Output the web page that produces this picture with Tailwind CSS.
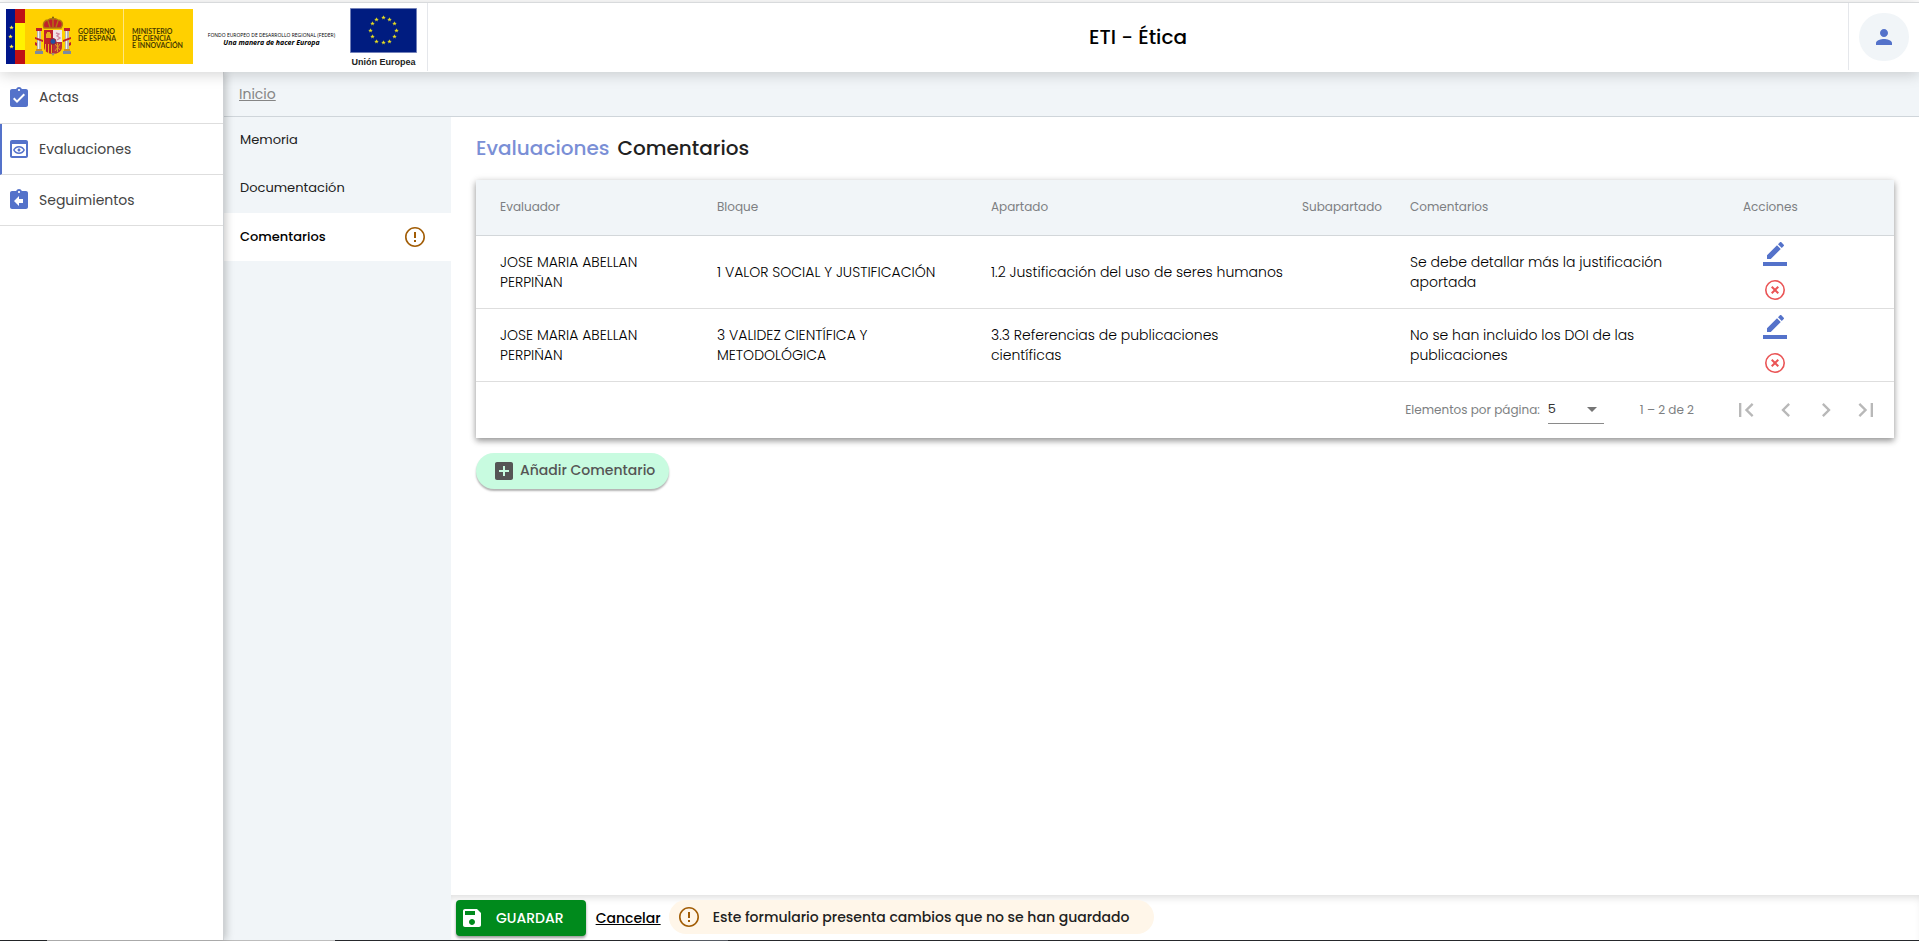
<!DOCTYPE html>
<html lang="es">
<head>
<meta charset="utf-8">
<title>ETI - Ética</title>
<script src="https://cdn.jsdelivr.net/npm/@tailwindcss/browser@4"></script>
</head>
<body class="flex h-screen flex-col overflow-hidden bg-white pt-[2px] font-['Poppins','Inter',sans-serif] text-[#212121]">

<svg class="hidden" aria-hidden="true">
  <symbol id="warn" viewBox="0 0 24 24"><path d="M11 15h2v2h-2zm0-8h2v6h-2zm.99-5C6.47 2 2 6.48 2 12s4.470 10 9.990 10C17.520 22 22 17.520 22 12S17.520 2 11.990 2zM12 20.400a8.400 8.400 0 1 1 0-16.800 8.400 8.400 0 0 1 0 16.800z"/></symbol>
  <symbol id="edit" viewBox="0 0 24 24"><path d="M17.750 7L14 3.250l-10 10V17h3.750l10-10zm2.960-2.960c.39-.39.39-1.020 0-1.410L18.370.29c-.39-.39-1.020-.39-1.410 0L15 2.250 18.750 6l1.960-1.960zM0 20h24v4H0z"/></symbol>
  <symbol id="remove" viewBox="0 0 24 24"><path d="M12 2a10 10 0 1 0 0 20 10 10 0 0 0 0-20zm0 18.400a8.400 8.400 0 1 1 0-16.800 8.400 8.400 0 0 1 0 16.800z"/><path d="M14.600 8L12 10.600 9.400 8 8 9.400l2.600 2.600L8 14.600 9.400 16l2.600-2.600 2.600 2.600 1.400-1.400-2.600-2.600L16 9.400z"/></symbol>
  <symbol id="star" viewBox="0 0 20 20"><path d="M10 1l2.300 6.300 6.700.2-5.300 4.100 1.900 6.400L10 14.200 4.400 18l1.900-6.400L1 7.500l6.700-.2z"/></symbol>
</svg>

<header class="relative z-20 flex h-[70px] shrink-0 items-stretch border-t border-[#d8dadc] bg-white shadow-[0_2px_14px_rgba(0,0,0,0.18)]">
  <div class="mb-px flex w-[428px] items-start border-r border-gray-200 pt-[5px] pl-[6px]">
    <div class="mt-px flex h-[55px] w-[187px] bg-[#ffd000]">
      <svg class="h-[55px] w-[68px] shrink-0" viewBox="0 0 68 55" role="img" aria-label="Escudo de España">
        <path fill="#00168a" d="M0 0h10v55H0z"/><path fill="#c01015" d="M9 0h10v55H9z"/><path fill="#fff200" d="M9 14h10v27H9z"/>
        <g fill="#fff24a"><use href="#star" x="3" y="16" width="5" height="5"/><use href="#star" x="2" y="25" width="5" height="5"/><use href="#star" x="3" y="35" width="5" height="5"/></g>
        <path fill="#c0202a" d="M38 19c-2-5 1-8 4-8 2-2 8-2 10 0 4 0 6 4 3 8z"/>
        <path fill="none" stroke="#b07a10" stroke-width="1.300" d="M38 19c-2-5 1-8 4-8 2-2 8-2 10 0 4 0 6 4 3 8zM42 12l2 6M47 9v9M52 12l-2 6"/>
        <circle cx="47" cy="8.500" r="1" fill="#7a5a10"/>
        <path fill="#c0202a" d="M38 21h9v12h-9zM38 33h9v12c-5 0-9-3-9-7z"/>
        <path fill="#f0e4e6" d="M47 21h9v12h-9z"/><path fill="#b8323c" d="M47 33h9v5c0 4-4 7-9 7z"/>
        <path fill="#e8b020" d="M40 29v-4l1-1v-1h3v1l1 1v4zM39 35h1v7h-1zM42 35h1v9h-1zM45 35h1v9h-1z"/>
        <path fill="none" stroke="#d08aa0" stroke-width="1.400" d="M50 24l3 1-2 2 3 2-3 2"/>
        <path fill="none" stroke="#e0a020" d="M49 35l5 6M54 35l-5 7M51.500 34v9"/>
        <circle cx="47" cy="32.500" r="3" fill="#2450a0" stroke="#a02030"/>
        <path fill="#b8b4ae" d="M31 22h4v19h-4zM59 22h4v19h-4z"/><path fill="#f4f2ee" d="M32 22h1v19h-1zM60 22h1v19h-1z"/>
        <path fill="#c0202a" d="M30 19h6v3h-6zM58 19h6v3h-6zM29 28l8 3v2l-8-3zM65 28l-8 3v2l8-3zM29 33l2 1v3l-2-1zM65 33l-2 1v3l2-1z"/>
        <path fill="#7c8aa0" d="M29 42h8v3h-8zM57 42h8v3h-8z"/><path fill="#d09020" d="M30 40h6v2h-6zM58 40h6v2h-6z"/>
        <path fill="#9a8a78" d="M45 44h4l-2 3z"/>
      </svg>
      <p class="mt-[19px] ml-1 w-[45px] shrink-0 font-['Lato',sans-serif] text-[7px] leading-[7px] font-bold text-[#4a3c00]">GOBIERNO<br>DE ESPAÑA</p>
      <p class="w-[70px] shrink-0 border-l border-[#ffe680] pt-[19px] pl-2 font-['Lato',sans-serif] text-[7px] leading-[7px] font-bold text-[#4a3c00]">MINISTERIO<br>DE CIENCIA<br>E INNOVACIÓN</p>
    </div>
    <div class="mt-[23px] w-[157px] text-center font-['Open_Sans',sans-serif] text-black">
      <p class="text-[5px] leading-[8px] whitespace-nowrap">FONDO EUROPEO DE DESARROLLO REGIONAL (FEDER)</p>
      <p class="text-[7px] leading-[8px] font-bold italic">Una manera de hacer Europa</p>
    </div>
    <div class="w-[67px]">
      <svg class="h-[45px] w-[67px]" viewBox="0 0 67 45" role="img" aria-label="Bandera de la Unión Europea">
        <path fill="#001c80" stroke="#7280b8" d="M.5.500h66v44H.5z"/>
        <g fill="#e6dc20"><use href="#star" x="31" y="7" width="5" height="5"/><use href="#star" x="37" y="9" width="5" height="5"/><use href="#star" x="42" y="13" width="5" height="5"/><use href="#star" x="44" y="20" width="5" height="5"/><use href="#star" x="42" y="26" width="5" height="5"/><use href="#star" x="37" y="31" width="5" height="5"/><use href="#star" x="31" y="32" width="5" height="5"/><use href="#star" x="24" y="31" width="5" height="5"/><use href="#star" x="20" y="26" width="5" height="5"/><use href="#star" x="18" y="20" width="5" height="5"/><use href="#star" x="20" y="13" width="5" height="5"/><use href="#star" x="24" y="9" width="5" height="5"/></g>
      </svg>
      <p class="mt-1 text-center font-['Liberation_Sans',sans-serif] text-[9px] leading-[10px] font-bold whitespace-nowrap text-[#222]">Unión Europea</p>
    </div>
  </div>
  <h1 class="flex flex-1 items-center justify-center pb-px text-[20px] font-medium text-black">ETI - Ética</h1>
  <div class="mb-[2px] flex w-[71px] items-center justify-center border-l border-gray-200">
    <button class="flex h-12 w-[50px] items-center justify-center rounded-full bg-[#f1f5f8]" aria-label="Usuario">
      <svg class="size-6 fill-[#5472ca]" viewBox="0 0 24 24"><path d="M12 12c2.210 0 4-1.790 4-4s-1.790-4-4-4-4 1.790-4 4 1.790 4 4 4zm0 2c-2.670 0-8 1.340-8 4v2h16v-2c0-2.660-5.330-4-8-4z"/></svg>
    </button>
  </div>
</header>

<div class="flex min-h-0 flex-1">
  <nav class="relative z-10 w-56 shrink-0 border-r border-[#cfd2d5] bg-white text-[14px] shadow-[2px_0_8px_rgba(0,0,0,0.22)]">
    <a href="#" class="flex h-[52px] items-center gap-2 border-b border-[#dedede] pl-[7px] text-[#444]"><svg class="size-6 fill-[#5472ca]" viewBox="0 0 24 24"><path d="M19 3h-4.180C14.400 1.840 13.300 1 12 1s-2.400.84-2.820 2H5c-1.100 0-2 .9-2 2v14c0 1.100.9 2 2 2h14c1.100 0 2-.9 2-2V5c0-1.100-.9-2-2-2zm-7 0c.55 0 1 .45 1 1s-.45 1-1 1-1-.45-1-1 .45-1 1-1zm-2 14l-4-4 1.410-1.410L10 14.170l6.590-6.590L18 9l-8 8z"/></svg>Actas</a>
    <a href="#" class="flex h-[51px] items-center gap-2 border-b border-l-2 border-b-[#dedede] border-l-[#5472ca] pl-[5px] text-[#444]"><svg class="size-6 fill-[#5472ca]" viewBox="0 0 24 24"><path d="M19 3H5c-1.110 0-2 .9-2 2v14c0 1.100.89 2 2 2h14c1.100 0 2-.9 2-2V5c0-1.100-.9-2-2-2zm0 16H5V7h14v12zm-7-8.500c1.840 0 3.480.96 4.340 2.500-.86 1.540-2.500 2.500-4.340 2.500S8.520 14.540 7.660 13c.86-1.540 2.500-2.500 4.340-2.500M12 9c-2.730 0-5.060 1.660-6 4 .94 2.340 3.270 4 6 4s5.060-1.660 6-4c-.94-2.340-3.270-4-6-4zm0 5.500c-.83 0-1.500-.67-1.500-1.500s.67-1.500 1.500-1.500 1.500.67 1.500 1.500-.67 1.500-1.500 1.500z"/></svg>Evaluaciones</a>
    <a href="#" class="flex h-[51px] items-center gap-2 border-b border-[#dedede] pl-[7px] text-[#444]"><svg class="size-6 fill-[#5472ca]" viewBox="0 0 24 24"><path d="M19 3h-4.180C14.400 1.840 13.300 1 12 1s-2.400.84-2.820 2H5c-1.100 0-2 .9-2 2v14c0 1.100.9 2 2 2h14c1.100 0 2-.9 2-2V5c0-1.100-.9-2-2-2zm-7 0c.55 0 1 .45 1 1s-.45 1-1 1-1-.45-1-1 .45-1 1-1zm4 12h-4v3l-5-5 5-5v3h4v4z"/></svg>Seguimientos</a>
  </nav>

  <div class="flex min-w-0 flex-1 flex-col">
    <div class="flex h-[45px] shrink-0 items-center border-b border-[#cfd5da] bg-[#f1f5f8] pl-[15px]"><a href="#" class="text-[14px] text-[#858585] underline">Inicio</a></div>
    <div class="flex min-h-0 flex-1">
      <nav class="w-[227px] shrink-0 bg-[#f1f5f8] text-[13px]">
        <a href="#" class="flex h-12 items-center px-4 pb-0.5">Memoria</a>
        <a href="#" class="flex h-12 items-center px-4 pb-0.5">Documentación</a>
        <a href="#" class="flex h-12 items-center justify-between bg-white px-4 pr-6 font-medium text-black">Comentarios <svg class="size-6 fill-[#a15c05]"><use href="#warn"/></svg></a>
      </nav>

      <main class="flex min-w-0 flex-1 flex-col">
        <div class="flex-1 px-6 pr-[25px] pt-[15px]">
          <h2 class="flex h-8 items-center gap-2 pl-px text-[20px] font-medium"><span class="text-[#7a8fd6]">Evaluaciones</span><span>Comentarios</span></h2>
          <div class="mt-4 ml-px bg-white shadow-[0_3px_6px_rgba(0,0,0,0.35),0_1px_8px_rgba(0,0,0,0.12)]">
            <table class="w-full table-fixed text-left text-[14px] leading-5">
              <colgroup><col class="w-[241px]"><col class="w-[274px]"><col class="w-[311px]"><col class="w-[108px]"><col class="w-[333px]"><col></colgroup>
              <thead>
                <tr class="h-[55px] border-b border-[#d3d7da] bg-[#f1f5f8] text-[12px] text-[#7d7f82]">
                  <th class="pl-6 font-normal">Evaluador</th><th class="font-normal">Bloque</th><th class="font-normal">Apartado</th><th class="font-normal">Subapartado</th><th class="font-normal">Comentarios</th><th class="font-normal">Acciones</th>
                </tr>
              </thead>
              <tbody class="font-light text-black">
                <tr class="h-[73px] border-b border-[#dedede]">
                  <td class="pr-12 pl-6">JOSE MARIA ABELLAN PERPIÑAN</td><td class="pr-6">1 VALOR SOCIAL Y JUSTIFICACIÓN</td><td class="pr-3">1.2 Justificación del uso de seres humanos</td><td></td><td class="pr-16">Se debe detallar más la justificación aportada</td>
                  <td><div class="flex w-16 flex-col items-center gap-3"><button aria-label="Editar"><svg class="size-6 fill-[#5472ca]"><use href="#edit"/></svg></button><button aria-label="Eliminar"><svg class="size-6 fill-[#ea5455]"><use href="#remove"/></svg></button></div></td>
                </tr>
                <tr class="h-[73px] border-b border-[#dedede]">
                  <td class="pr-12 pl-6">JOSE MARIA ABELLAN PERPIÑAN</td><td class="pr-24">3 VALIDEZ CIENTÍFICA Y METODOLÓGICA</td><td class="pr-12">3.3 Referencias de publicaciones científicas</td><td></td><td class="pr-16">No se han incluido los DOI de las publicaciones</td>
                  <td><div class="flex w-16 flex-col items-center gap-3"><button aria-label="Editar"><svg class="size-6 fill-[#5472ca]"><use href="#edit"/></svg></button><button aria-label="Eliminar"><svg class="size-6 fill-[#ea5455]"><use href="#remove"/></svg></button></div></td>
                </tr>
              </tbody>
            </table>
            <div class="flex h-14 items-center justify-end pr-2 text-[12px] text-[#7d7f82]">
              <label for="size" class="mr-2">Elementos por página:</label>
              <div class="flex h-7 w-14 items-center border-b border-[#8a8a8a]">
                <select id="size" class="-mr-6 w-14 shrink-0 appearance-none bg-transparent text-[13px] text-[#333]"><option>5</option></select>
                <svg class="pointer-events-none size-6 shrink-0 fill-[#757575]" viewBox="0 0 24 24"><path d="M7 10l5 5 5-5z"/></svg>
              </div>
              <span class="mr-8 ml-9">1 – 2 de 2</span>
              <div class="flex">
                <button disabled class="flex size-10 items-center justify-center" aria-label="Primera página"><svg class="size-7 fill-[#b8b8b8]" viewBox="0 0 24 24"><path d="M18.410 16.590L13.820 12l4.590-4.590L17 6l-6 6 6 6zM6 6h2v12H6z"/></svg></button>
                <button disabled class="flex size-10 items-center justify-center" aria-label="Página anterior"><svg class="size-7 fill-[#b8b8b8]" viewBox="0 0 24 24"><path d="M15.410 7.410L14 6l-6 6 6 6 1.410-1.410L10.830 12z"/></svg></button>
                <button disabled class="flex size-10 items-center justify-center" aria-label="Página siguiente"><svg class="size-7 fill-[#b8b8b8]" viewBox="0 0 24 24"><path d="M10 6L8.590 7.410 13.170 12l-4.580 4.590L10 18l6-6z"/></svg></button>
                <button disabled class="flex size-10 items-center justify-center" aria-label="Última página"><svg class="size-7 fill-[#b8b8b8]" viewBox="0 0 24 24"><path d="M5.590 7.410L10.180 12l-4.590 4.590L7 18l6-6-6-6zM16 6h2v12h-2z"/></svg></button>
              </div>
            </div>
          </div>
          <button class="mt-[15px] ml-px flex h-9 items-center gap-1 rounded-full bg-[#c8fbe0] pr-[14px] pl-4 text-[14px] font-medium text-[#555] shadow-[0_2px_2px_rgba(0,0,0,0.3)]"><svg class="size-6 fill-[#555]" viewBox="0 0 24 24"><path d="M19 3H5c-1.110 0-2 .9-2 2v14c0 1.100.89 2 2 2h14c1.100 0 2-.9 2-2V5c0-1.100-.9-2-2-2zm-2 10h-4v4h-2v-4H7v-2h4V7h2v4h4v2z"/></svg>Añadir Comentario</button>
        </div>

        <footer class="flex h-[45px] shrink-0 items-start pt-[5px] pl-[5px] shadow-[inset_0_6px_8px_-4px_rgba(0,0,0,0.15)]">
          <button class="flex h-9 items-center gap-3 rounded bg-[#008a1c] pr-[22px] pl-1 text-[14px] font-medium text-white shadow-[0_2px_3px_rgba(0,0,0,0.4)]"><svg class="size-6 fill-white" viewBox="0 0 24 24"><path d="M17 3H5c-1.110 0-2 .9-2 2v14c0 1.100.89 2 2 2h14c1.100 0 2-.9 2-2V7l-4-4zm-5 16c-1.660 0-3-1.340-3-3s1.340-3 3-3 3 1.340 3 3-1.340 3-3 3zm3-10H5V5h10v4z"/></svg>GUARDAR</button>
          <a href="#" class="mt-2 ml-[10px] text-[14px] leading-5 font-medium text-black underline">Cancelar</a>
          <p class="ml-2 flex h-[34px] items-center gap-3 rounded-full bg-[#fff6e9] pr-6 pl-2 text-[14px] font-medium"><svg class="size-6 fill-[#a15c05]"><use href="#warn"/></svg>Este formulario presenta cambios que no se han guardado</p>
        </footer>
      </main>
    </div>
  </div>
</div>
<div class="flex h-px shrink-0 bg-[#26282c]"><div class="ml-[47px] w-72 bg-[#bdbdbd]"></div><div class="ml-[345px] w-12 bg-[#555a62]"></div></div>
</body>
</html>
